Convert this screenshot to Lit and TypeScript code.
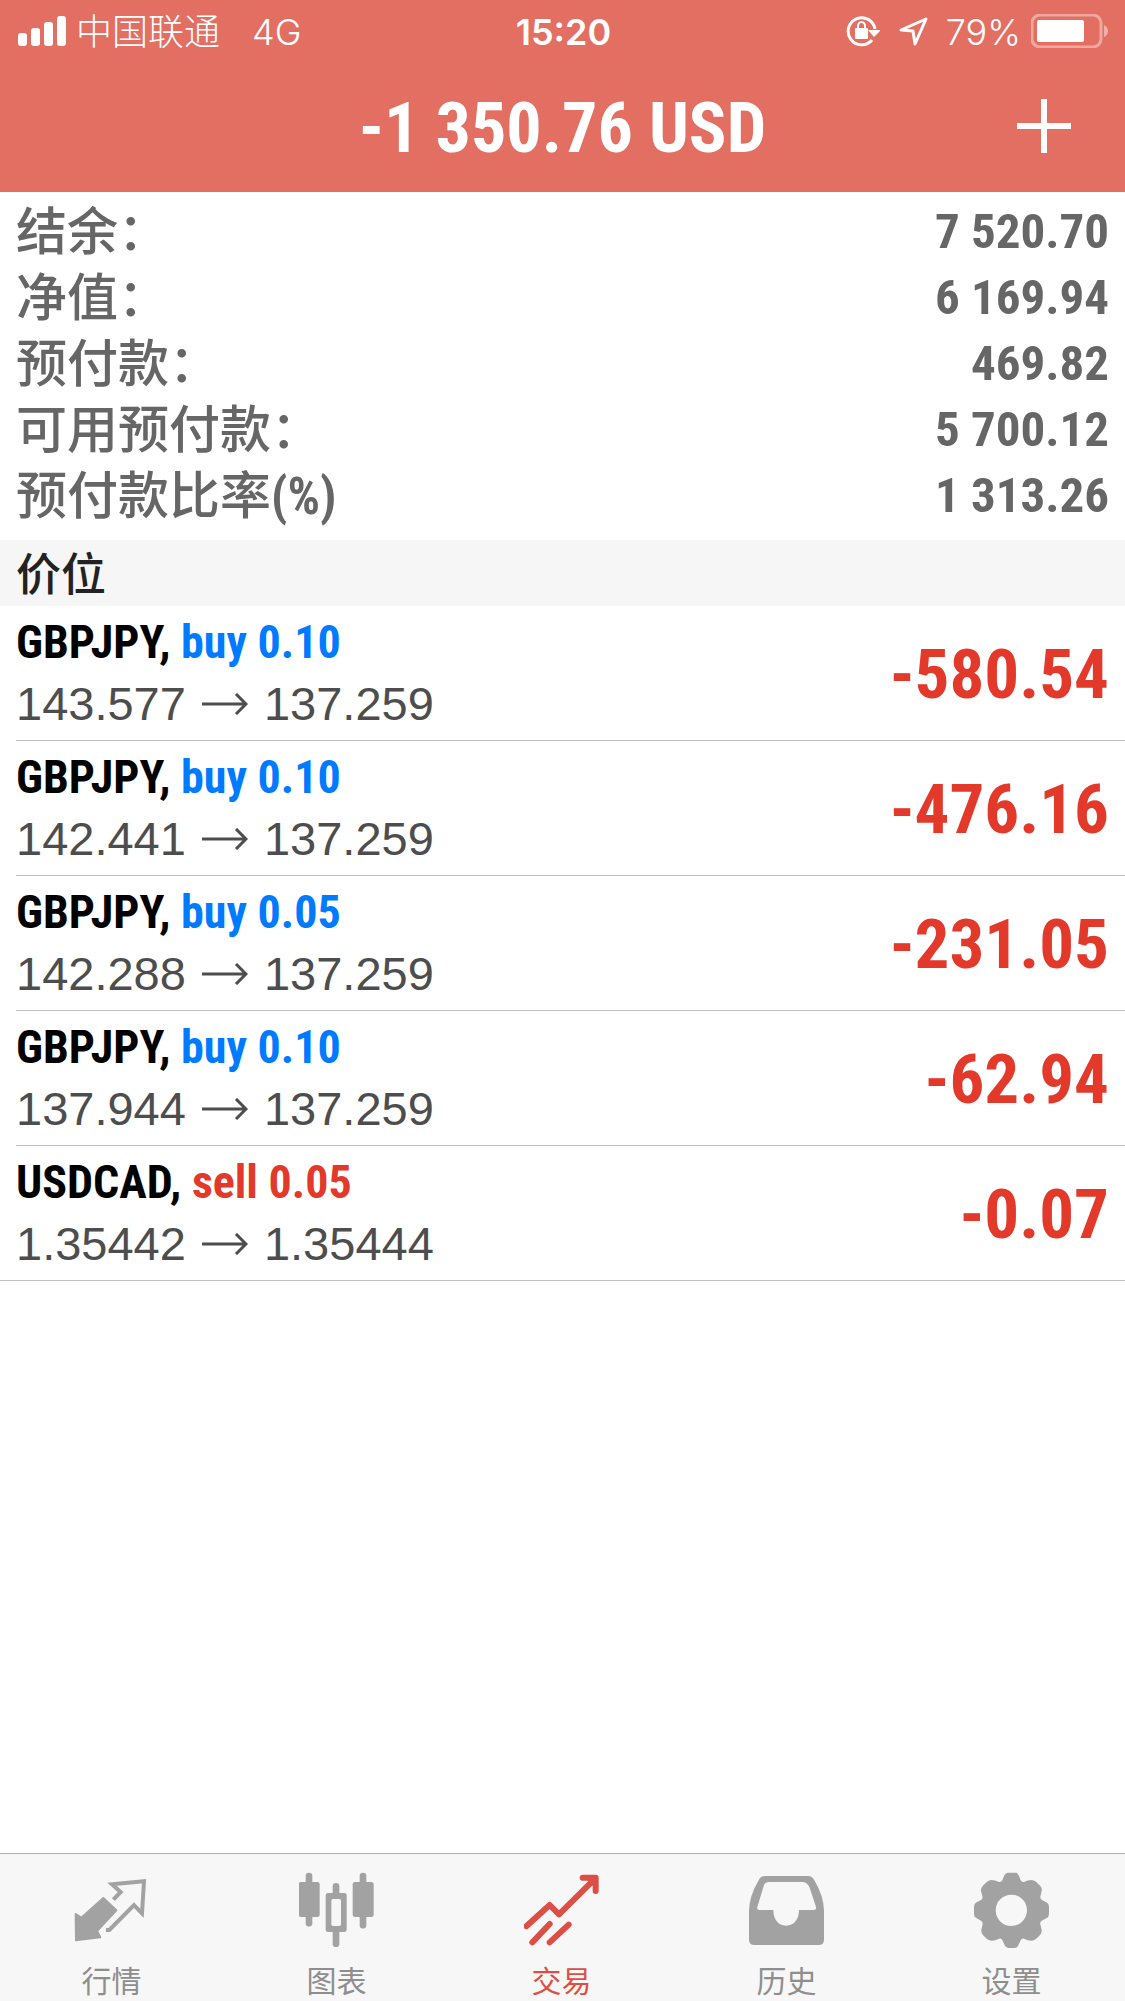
import { LitElement, html, css, svg } from "lit";
import { customElement, property, state } from "lit/decorators.js";
import { classMap } from "lit/directives/class-map.js";

interface Position {
  symbol: string;
  side: "buy" | "sell";
  volume: string;
  open: string;
  current: string;
  profit: string;
}

interface SummaryLine {
  name: string;
  unit?: string;
  value: string;
}

const SUMMARY: SummaryLine[] = [
  { name: "结余：", value: "7 520.70" },
  { name: "净值：", value: "6 169.94" },
  { name: "预付款：", value: "469.82" },
  { name: "可用预付款：", value: "5 700.12" },
  { name: "预付款比率", unit: "(%)", value: "1 313.26" },
];

const POSITIONS: Position[] = [
  { symbol: "GBPJPY", side: "buy", volume: "0.10", open: "143.577", current: "137.259", profit: "-580.54" },
  { symbol: "GBPJPY", side: "buy", volume: "0.10", open: "142.441", current: "137.259", profit: "-476.16" },
  { symbol: "GBPJPY", side: "buy", volume: "0.05", open: "142.288", current: "137.259", profit: "-231.05" },
  { symbol: "GBPJPY", side: "buy", volume: "0.10", open: "137.944", current: "137.259", profit: "-62.94" },
  { symbol: "USDCAD", side: "sell", volume: "0.05", open: "1.35442", current: "1.35444", profit: "-0.07" },
];

const quotesIcon = svg`
  <path fill="currentColor" stroke="currentColor" stroke-width="6" stroke-linejoin="round"
    d="M229 222L246 233L312 174L351 211L293 273L303 292L230 301Z"/>
  <path fill="none" stroke="currentColor" stroke-width="12"
    d="M342 179L364 156L338 133L434 124L428 220L404 195L330 270H320"/>`;

const chartIcon = svg`
  <g fill="currentColor">
    <rect x="918" y="98" width="20" height="162" rx="10"/>
    <rect x="897" y="126" width="63" height="105" rx="7"/>
    <rect x="1080" y="98" width="20" height="168" rx="10"/>
    <rect x="1059" y="126" width="63" height="105" rx="7"/>
    <rect x="999" y="129" width="20" height="40" rx="10"/>
    <rect x="999" y="260" width="20" height="61" rx="10"/>
    <path fill-rule="evenodd" d="M985 159h49q7 0 7 7v103q0 7 -7 7h-49q-7 0 -7 -7v-103q0 -7 7 -7zM1000 177q-5 0 -5 5v71q0 5 5 5h19q5 0 5 -5v-71q0 -5 -5 -5z"/>
  </g>`;

const tradeIcon = svg`
  <g fill="none" stroke="currentColor" stroke-width="18" stroke-linecap="round" stroke-linejoin="round">
    <path d="M440 259L510 195L538 223L640 122"/>
    <path d="M609 113H648V153"/>
    <path d="M458 307L510 252M510 307L567 254"/>
  </g>
  <path fill="currentColor" d="M615 113H648V146Z"/>`;

const historyIcon = svg`
  <path fill="currentColor" fill-rule="evenodd"
    d="M60 108H188Q202 108 208 121Q236 168 237 212V299Q237 315 221 315H28Q12 315 12 299V212Q13 168 41 121Q47 108 60 108Z
    M72 126Q61 126 57 135L37 201Q34 210 43 210H85C85 238 100 257 123 257C147 257 162 238 162 210H206Q215 210 213 201L194 143Q187 126 172 126Z"/>`;

const settingsIcon = svg`
  <path fill="currentColor" fill-rule="evenodd"
    d="M787 98H814Q819 100 822 108L827 121Q830 127 837 126Q846 120 861 120Q868 121 874 126L886 138Q892 144 890 153L886 170Q885 176 891 180L904 187Q912 191 912 200V222Q912 231 904 235L890 242Q884 246 886 253L890 270Q891 277 886 284L874 296Q868 301 861 302Q848 302 837 296Q830 294 827 301L820 316Q817 324 809 324H790Q782 324 779 316L773 302Q770 294 762 296Q750 303 738 302Q731 301 725 296L713 284Q708 277 709 269L713 253Q714 246 708 242L695 235Q687 231 687 222V200Q687 191 695 187L708 180Q714 176 712 169L708 153Q707 144 713 138L725 126Q731 121 738 120Q751 120 762 126Q769 127 772 121L777 108Q780 100 787 98Z
    M799 164A47 47 0 1 0 799 258A47 47 0 1 0 799 164Z"/>`;

const TABS = [
  { id: "quotes", label: "行情", box: "224 96 228 228", icon: quotesIcon },
  { id: "chart", label: "图表", box: "898 96 228 228", icon: chartIcon },
  { id: "trade", label: "交易", box: "433 96 228 228", icon: tradeIcon },
  { id: "history", label: "历史", box: "12 96 228 228", icon: historyIcon },
  { id: "settings", label: "设置", box: "687 96 228 228", icon: settingsIcon },
];

@customElement("status-bar")
export class StatusBar extends LitElement {
  static styles = css`
    :host {
      display: grid;
      grid-template-columns: 1fr auto 1fr;
      align-items: center;
      height: 60px;
      padding: 0 16px 0 18px;
      color: #fff;
      font-family: Inter, "Noto Sans CJK SC", sans-serif;
      font-size: 36px;
      font-weight: 300;
      line-height: 60px;
    }
    .group {
      display: flex;
      align-items: center;
    }
    .carrier {
      margin: 0 32px 0 10px;
      padding-top: 2px;
    }
    .label {
      padding-top: 2px;
    }
    .time {
      padding-top: 2px;
      font-weight: 600;
    }
    .end {
      justify-content: flex-end;
    }
    .lock,
    .arrow {
      margin-right: 18px;
    }
    .battery {
      margin-left: 10px;
    }
  `;

  render() {
    return html`
      <div class="group">
        <svg width="48" height="30" viewBox="0 0 48 30" fill="#fff" aria-hidden="true">
          <rect y="17" width="9" height="13" rx="3" />
          <rect x="13" y="12" width="9" height="18" rx="3" />
          <rect x="26" y="6" width="9" height="24" rx="3" />
          <rect x="39" width="9" height="30" rx="3" />
        </svg>
        <span class="carrier">中国联通</span>
        <span class="label">4G</span>
      </div>
      <time class="time">15:20</time>
      <div class="group end">
        <svg class="lock" width="34" height="32" viewBox="0 0 34 32" fill="none" stroke="#fff" stroke-width="3" aria-hidden="true">
          <path d="M26 25A13.500 13.500 0 1 1 29 14" />
          <path d="M22 15H35L28 22Z" fill="#fff" stroke="none" />
          <rect x="9" y="13" width="13" height="11" rx="1" fill="#fff" stroke="none" />
          <path d="M12 14V11a3.500 4 0 0 1 7 0V14" stroke-width="2" />
        </svg>
        <svg class="arrow" width="30" height="30" viewBox="0 0 30 30" fill="none" stroke="#fff" stroke-width="3" stroke-linejoin="round" aria-hidden="true">
          <path d="M28 3L3 14L15 15L17 28Z" />
        </svg>
        <span class="label">79%</span>
        <svg class="battery" width="78" height="34" viewBox="0 0 78 34" aria-hidden="true">
          <rect x="1" y="1" width="69" height="32" rx="8" fill="none" stroke="#fff" stroke-opacity="0.4" stroke-width="3" />
          <path d="M73 11q4 2 4 6t-4 6z" fill="#fff" fill-opacity="0.45" />
          <rect x="6" y="6" width="47" height="22" rx="2" fill="#fff" />
        </svg>
      </div>
    `;
  }
}

@customElement("position-row")
export class PositionRow extends LitElement {
  @property({ attribute: false }) position!: Position;

  static styles = css`
    :host {
      display: flex;
      align-items: center;
      justify-content: space-between;
      height: 134px;
      padding-right: 16px;
    }
    .title {
      font-family: "Roboto Condensed", "Liberation Sans Narrow", "Liberation Sans", sans-serif;
      font-size: 46px;
      font-weight: 700;
      line-height: 62px;
      color: #000;
    }
    .buy {
      color: #007aff;
    }
    .sell,
    .profit {
      color: #e3392a;
    }
    .prices {
      display: flex;
      align-items: center;
      font-family: "Liberation Sans", sans-serif;
      font-size: 47px;
      line-height: 62px;
      color: #4d4d4d;
    }
    .arrow {
      margin: 0 16px;
    }
    .profit {
      padding-top: 4px;
      font-family: "Roboto Condensed", "Liberation Sans Narrow", "Liberation Sans", sans-serif;
      font-size: 69px;
      font-weight: 700;
      line-height: 80px;
    }
  `;

  render() {
    const p = this.position;
    return html`
      <div>
        <div class="title">${p.symbol}, <span class=${p.side}>${p.side} ${p.volume}</span></div>
        <div class="prices">
          <span>${p.open}</span>
          <svg class="arrow" width="46" height="22" viewBox="0 0 46 22" fill="none" stroke="currentColor" stroke-width="3" role="img" aria-label="→">
            <path d="M0 11H44M34 1L44 11L34 21" />
          </svg>
          <span>${p.current}</span>
        </div>
      </div>
      <div class="profit">${p.profit}</div>
    `;
  }
}

@customElement("app-root")
export class AppRoot extends LitElement {
  @state() private tab = "trade";

  static styles = css`
    :host {
      display: flex;
      flex-direction: column;
      min-height: 100vh;
      background: #fff;
      font-family: "Roboto Condensed", "Liberation Sans Narrow", "Noto Sans CJK SC", sans-serif;
    }
    .header {
      background: #e36f62;
      color: #fff;
    }
    .bar {
      display: grid;
      grid-template-columns: 1fr auto 1fr;
      align-items: center;
      height: 132px;
    }
    .total {
      grid-column: 2;
      margin: 0;
      padding-top: 4px;
      font-size: 70px;
      font-weight: 700;
      line-height: 128px;
    }
    .add {
      justify-self: end;
      display: flex;
      margin-right: 42px;
      padding: 12px;
      border: 0;
      background: none;
      color: inherit;
    }
    .summary {
      margin: 0;
      padding: 7px 16px 11px;
      color: #666;
      font-weight: 700;
    }
    .line {
      display: flex;
      justify-content: space-between;
      height: 66px;
    }
    .name {
      font-size: 51px;
      font-weight: 500;
      line-height: 68px;
    }
    .unit {
      font-weight: 700;
    }
    .value {
      margin: 0;
      font-size: 49px;
      line-height: 66px;
    }
    .section {
      margin: 0;
      padding: 6px 16px 0;
      background: #f6f6f6;
      color: #222;
      font-size: 45px;
      font-weight: 500;
      line-height: 60px;
    }
    .list {
      flex: 1;
      margin: 0;
      padding: 0;
      list-style: none;
    }
    .item {
      margin-left: 16px;
      border-bottom: 1px solid #c0c0c0;
    }
    .item:last-child {
      margin-left: 0;
      padding-left: 16px;
    }
    .tabs {
      display: grid;
      grid-template-columns: repeat(5, 1fr);
      border-top: 1px solid #b0b0b0;
      background: #f7f7f7;
    }
    .tab {
      display: flex;
      flex-direction: column;
      align-items: center;
      gap: 11px;
      height: 147px;
      padding: 18px 2px 0 0;
      border: 0;
      background: none;
      color: #a2a2a2;
      font-family: "Noto Sans CJK SC", sans-serif;
      font-size: 30px;
      line-height: 40px;
    }
    .caption {
      color: #8e8e8e;
    }
    .active,
    .active .caption {
      color: #dc4f46;
    }
  `;

  render() {
    return html`
      <header class="header">
        <status-bar></status-bar>
        <div class="bar">
          <h1 class="total">-1 350.76 USD</h1>
          <button class="add" aria-label="Add">
            <svg width="54" height="54" viewBox="0 0 54 54" stroke="currentColor" stroke-width="6" aria-hidden="true">
              <path d="M0 27H54M27 0V54" />
            </svg>
          </button>
        </div>
      </header>
      <dl class="summary">
        ${SUMMARY.map(
          (s) => html`
            <div class="line">
              <dt class="name">${s.name}${s.unit ? html`<span class="unit">${s.unit}</span>` : null}</dt>
              <dd class="value">${s.value}</dd>
            </div>
          `
        )}
      </dl>
      <h2 class="section">价位</h2>
      <ul class="list">
        ${POSITIONS.map((p) => html`<li class="item"><position-row .position=${p}></position-row></li>`)}
      </ul>
      <nav class="tabs">
        ${TABS.map(
          (t) => html`
            <button class=${classMap({ tab: true, active: t.id === this.tab })} @click=${() => (this.tab = t.id)}>
              <svg width="76" height="76" viewBox=${t.box} aria-hidden="true">${t.icon}</svg>
              <span class="caption">${t.label}</span>
            </button>
          `
        )}
      </nav>
    `;
  }
}
